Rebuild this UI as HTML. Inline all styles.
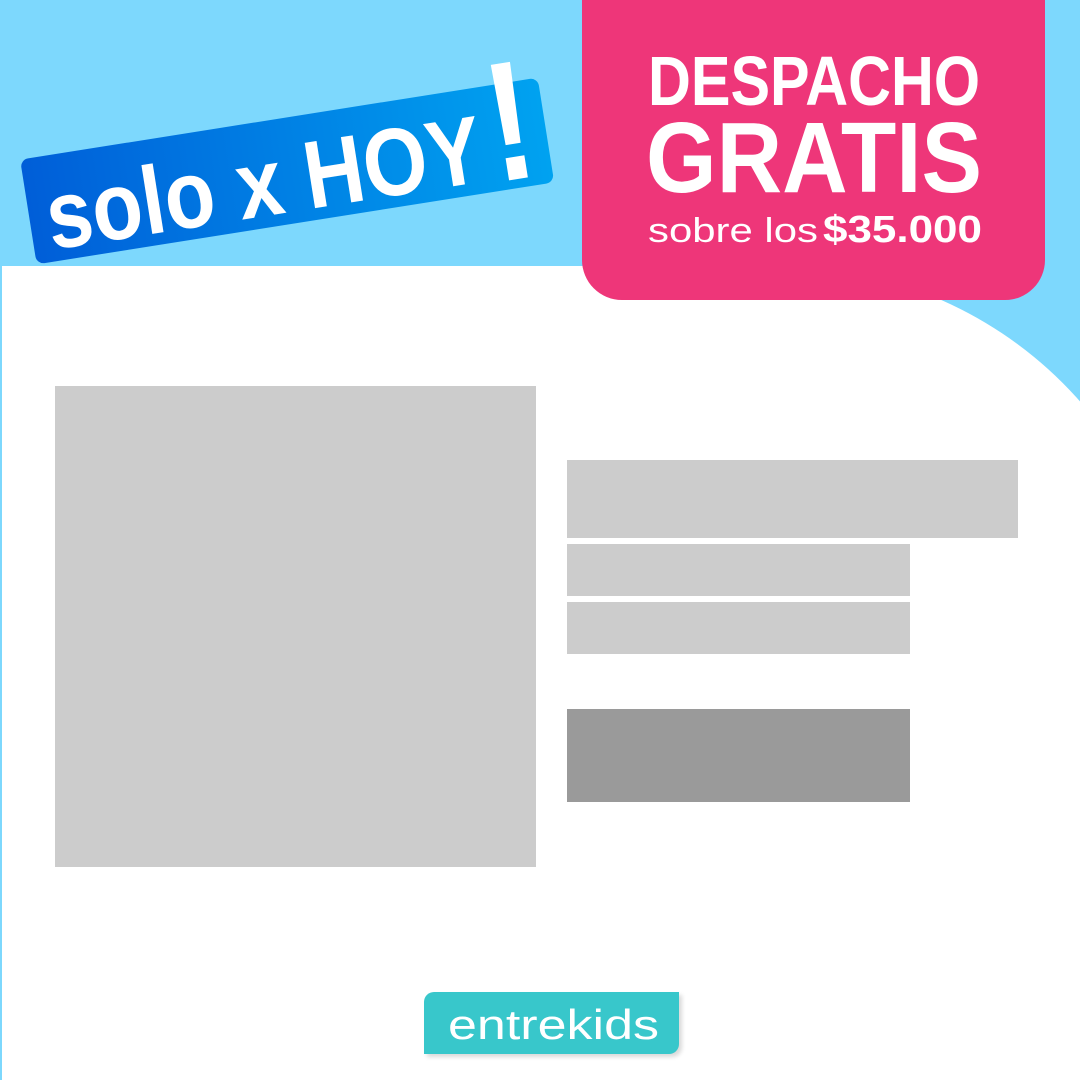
<!DOCTYPE html>
<html><head><meta charset="utf-8"><style>
html,body{margin:0;padding:0;width:1080px;height:1080px;overflow:hidden}
body{position:relative;background:#7dd8fd;font-family:"Liberation Sans",sans-serif}
.white{position:absolute;left:2px;top:266px;width:1178px;height:814px;background:#fff;border-top-right-radius:400px}
.pink{position:absolute;left:582px;top:0;width:463px;height:300px;background:#ee3679;border-radius:0 0 40px 40px}
.g{position:absolute;background:#cccccc}
</style></head><body>
<div class="white"></div>
<div class="pink"></div>
<svg width="1080" height="1080" style="position:absolute;left:0;top:0">
<defs><linearGradient id="bg" x1="0" x2="1"><stop offset="0" stop-color="#005ed8"/><stop offset="1" stop-color="#00a2f0"/></linearGradient></defs>
<g fill="#fff" font-family="Liberation Sans, sans-serif">
<text x="648" y="105" font-size="70" font-weight="bold" textLength="332" lengthAdjust="spacingAndGlyphs">DESPACHO</text>
<text x="646" y="192" font-size="100" font-weight="bold" textLength="336" lengthAdjust="spacingAndGlyphs">GRATIS</text>
<text x="648" y="242" font-size="34" textLength="170" lengthAdjust="spacingAndGlyphs">sobre los</text>
<text x="823" y="242" font-size="38" font-weight="bold" textLength="159" lengthAdjust="spacingAndGlyphs">$35.000</text>
</g>
<g transform="translate(287,170) rotate(-9)">
<rect x="-262" y="-52" width="524" height="106" rx="8" fill="url(#bg)"/>
<text x="-245" y="42" fill="#fff" font-size="96" font-weight="bold" font-family="Liberation Sans, sans-serif" textLength="440" lengthAdjust="spacingAndGlyphs">solo x HOY</text>
<text x="205" y="45" fill="#fff" font-size="170" font-weight="bold" font-family="Liberation Sans, sans-serif" textLength="45" lengthAdjust="spacingAndGlyphs">!</text>
</g>
</svg>
<div class="g" style="left:55px;top:386px;width:481px;height:481px"></div>
<div class="g" style="left:567px;top:460px;width:451px;height:78px"></div>
<div class="g" style="left:567px;top:544px;width:343px;height:52px"></div>
<div class="g" style="left:567px;top:602px;width:343px;height:52px"></div>
<div class="g" style="left:567px;top:709px;width:343px;height:93px;background:#9a9a9a"></div>
<div style="position:absolute;left:424px;top:992px;width:255px;height:62px;background:#38c7cb;border-radius:10px 0 10px 0;box-shadow:3px 3px 4px rgba(0,0,0,.15)"></div>
<div style="position:absolute;left:448px;top:998px;width:212px;height:50px">
<svg width="212" height="50"><text x="0" y="41" fill="#fff" font-size="42" font-family="Liberation Sans, sans-serif" textLength="211" lengthAdjust="spacingAndGlyphs">entrekids</text></svg></div>
</body></html>
